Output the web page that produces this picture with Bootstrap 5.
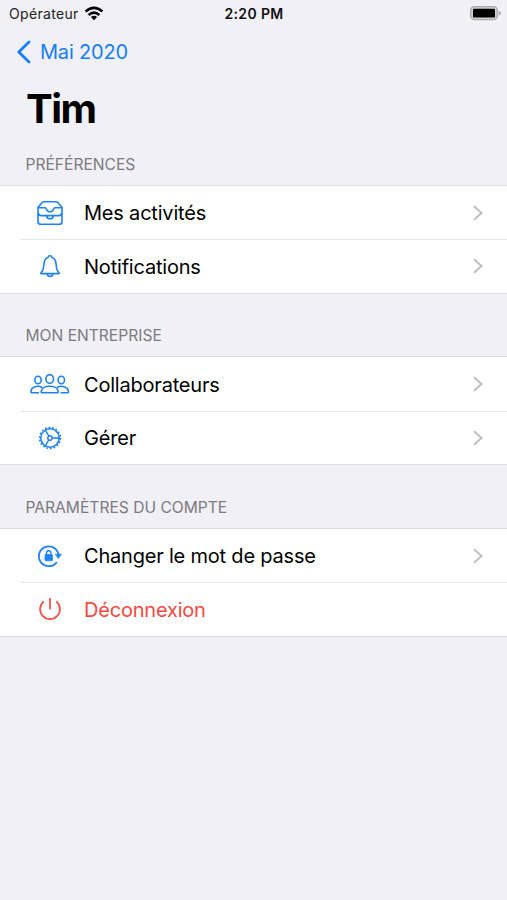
<!DOCTYPE html>
<html lang="fr">
<head>
<meta charset="utf-8">
<meta name="viewport" content="width=device-width, initial-scale=1">
<title>Tim</title>
<link href="https://cdn.jsdelivr.net/npm/bootstrap@5.3.0/dist/css/bootstrap.min.css" rel="stylesheet">
<style>
body{background:#f1f0f6;font-family:Inter,"Liberation Sans",sans-serif;color:#000;overflow:hidden}
svg{display:block;flex:none}
.ios-status{height:27px;padding:0 6px 0 9px;font-size:14px;line-height:27px}
.ios-status>div{flex:1 1 0}
.carrier{letter-spacing:.32px;color:#222}
.clock{font-weight:600;letter-spacing:.35px;margin-right:2px;color:#111}
.back-link{height:50px;padding:0 0 0 16.5px;color:#147efb;font-size:20px;letter-spacing:-.2px}
.back-text{margin-left:9.5px}
.page-title{height:63px;line-height:64px;padding-left:26px;font-size:40px;font-weight:700;letter-spacing:-1.5px}
.group-label{height:44.6px;line-height:21px;padding:14px 0 0 25.5px;font-size:15.6px;font-weight:400;color:#7c7b81}
.group-label.later{height:62.5px;padding-top:31.5px}
.settings{--bs-list-group-bg:#fff;border-top:1px solid #dddce1;border-bottom:1px solid #dddce1;background:#fff}
.settings .list-group-item{height:53.5px;margin:0;padding:1px 23px 0 30px;border:0;color:#000;font-size:20px;letter-spacing:-.2px;background:none}
.settings .list-group-item+.list-group-item{background:linear-gradient(#e8e8ea,#e8e8ea) 20px 0/100% 1px no-repeat}
.settings .list-group-item.logout{color:#fc4840}
.row-text{margin-left:14px;padding-top:1px}
.ic{fill:none;stroke:#1e82f5;stroke-width:1.6;stroke-linecap:round;stroke-linejoin:round}
.chev{fill:none;stroke:#bfbfc3;stroke-width:2;margin-left:auto}
</style>
</head>
<body>
<header>
  <div class="ios-status d-flex align-items-center">
    <div class="d-flex align-items-center"><span class="carrier">Opérateur</span>
      <svg class="ms-1" width="22" height="16" viewBox="0 0 22 16" fill="none" stroke="#000" stroke-width="2.6"><path d="M2.6 5.6Q11-1.7 19.4 5.6M5.6 8.9Q11 4.2 16.4 8.9"/><path d="M7.9 11.1Q11 8.6 14.1 11.1L11 14.3Z" fill="#000" stroke="none"/></svg>
    </div>
    <span class="clock">2:20 PM</span>
    <div class="d-flex justify-content-end">
      <svg width="31" height="15" viewBox="0 0 31 15"><rect x=".7" y=".7" width="26.6" height="13" rx="3.6" fill="#d0d0d3" stroke="#aaa9ad" stroke-width="1.3"/><path d="M28.6 4.8Q31 5.5 31 7.2T28.6 9.6Z" fill="#aaa9ad"/><rect x="3" y="2.8" width="22" height="8.8" rx="1.2"/></svg>
    </div>
  </div>
  <a href="#" class="back-link d-flex align-items-center text-decoration-none"><svg width="14" height="24" viewBox="0 0 14 24" fill="none" stroke="#147efb" stroke-width="2.8" stroke-linecap="round" stroke-linejoin="round"><path d="M12 2L1.8 12 12 22"/></svg><span class="back-text">Mai 2020</span></a>
  <h1 class="page-title m-0">Tim</h1>
</header>
<main>
  <h2 class="group-label m-0">PRÉFÉRENCES</h2>
  <div class="settings list-group list-group-flush">
    <a href="#" class="list-group-item d-flex align-items-center">
      <svg class="ic" width="40" height="30" viewBox="0 0 40 30"><path d="M8 9.2L12 4.8Q13 3.8 14.5 3.8H25.5Q27 3.8 28 4.8L32 9.2V23.7Q32 26.3 29.3 26.3H10.7Q8 26.3 8 23.7ZM8 9.8H15Q16 9.8 16.5 11.2Q17.4 13.8 20 13.8T23.5 11.2Q24 9.8 25 9.8H32M8.2 14.8Q8.7 17.6 11 17.6H16.5Q17 20.8 20 20.8T23.5 17.6H29Q31.3 17.6 31.8 14.8M16.5 17.6H23.5"/></svg>
      <span class="row-text">Mes activités</span>
      <svg class="chev" width="12" height="18" viewBox="0 0 12 18"><path d="M2 2.3L9.5 9 2 15.7"/></svg>
    </a>
    <a href="#" class="list-group-item d-flex align-items-center">
      <svg class="ic" width="40" height="30" viewBox="0 0 40 30"><path d="M10.8 22.6Q10.8 21.6 12 20.4Q13.5 18.8 13.8 14C14 9.5 15.3 7.2 18 6.4Q18.3 4.7 20 4.7T22 6.4C24.7 7.2 26 9.5 26.2 14Q26.5 18.8 28 20.4Q29.2 21.6 29.2 22.6ZM17.2 22.8Q17.5 25.4 20 25.4T22.8 22.8"/></svg>
      <span class="row-text">Notifications</span>
      <svg class="chev" width="12" height="18" viewBox="0 0 12 18"><path d="M2 2.3L9.5 9 2 15.7"/></svg>
    </a>
  </div>
  <h2 class="group-label later m-0">MON ENTREPRISE</h2>
  <div class="settings list-group list-group-flush">
    <a href="#" class="list-group-item d-flex align-items-center">
      <svg class="ic" width="40" height="30" viewBox="0 0 40 30"><ellipse cx="19.7" cy="9.9" rx="3.8" ry="4.3"/><ellipse cx="8" cy="11" rx="3.2" ry="3.7"/><ellipse cx="31.3" cy="11" rx="3.2" ry="3.7"/><path d="M11.6 23.7Q11 23.7 11.2 22.4C12 15.5 27.4 15.5 28.2 22.4Q28.4 23.7 27.8 23.7ZM8.4 23.7H1.5Q.8 23.7.9 22.6C1.3 17.8 7.8 16.2 11.8 18.2M31 23.7H37.8Q38.5 23.7 38.4 22.6C38 17.8 31.5 16.2 27.5 18.2"/></svg>
      <span class="row-text">Collaborateurs</span>
      <svg class="chev" width="12" height="18" viewBox="0 0 12 18"><path d="M2 2.3L9.5 9 2 15.7"/></svg>
    </a>
    <a href="#" class="list-group-item d-flex align-items-center">
      <svg class="ic" width="40" height="30" viewBox="0 0 40 30"><circle cx="20" cy="15" r="9.2"/><circle cx="20" cy="15" r="10.5" stroke-width="1.4" stroke-linecap="butt" stroke-dasharray="1.8 1.865"/><circle cx="20" cy="15" r="2.2" stroke-width="1.4"/><path stroke-width="1.4" d="M22.3 15H29M18.8 13L15.4 7.2M18.8 17L15.4 22.8"/></svg>
      <span class="row-text">Gérer</span>
      <svg class="chev" width="12" height="18" viewBox="0 0 12 18"><path d="M2 2.3L9.5 9 2 15.7"/></svg>
    </a>
  </div>
  <h2 class="group-label later m-0">PARAMÈTRES DU COMPTE</h2>
  <div class="settings list-group list-group-flush">
    <a href="#" class="list-group-item d-flex align-items-center">
      <svg class="ic" width="40" height="30" viewBox="0 0 40 30"><path d="M26.4 21.6A9.9 9.9 0 1 1 28.4 13" stroke-width="1.8"/><path d="M25.5 13.3H31.3L28.5 17.2Z" fill="#1e82f5" stroke-width=".8"/><rect x="15" y="13.6" width="7.4" height="6.2" rx=".7" fill="#1e82f5" stroke-width=".8"/><path stroke-width="1.4" d="M16.5 13.5V12Q16.5 9.7 18.7 9.7T20.9 12V13.5"/></svg>
      <span class="row-text">Changer le mot de passe</span>
      <svg class="chev" width="12" height="18" viewBox="0 0 12 18"><path d="M2 2.3L9.5 9 2 15.7"/></svg>
    </a>
    <a href="#" class="list-group-item logout d-flex align-items-center">
      <svg width="40" height="30" viewBox="0 0 40 30" fill="none" stroke="#f5524b" stroke-width="1.8" stroke-linecap="round"><path d="M20 4.7V14.5M13.2 7.9A9.9 9.9 0 1 0 26.8 7.9"/></svg>
      <span class="row-text">Déconnexion</span>
    </a>
  </div>
</main>
<script src="https://cdn.jsdelivr.net/npm/bootstrap@5.3.0/dist/js/bootstrap.bundle.min.js"></script>
</body>
</html>
